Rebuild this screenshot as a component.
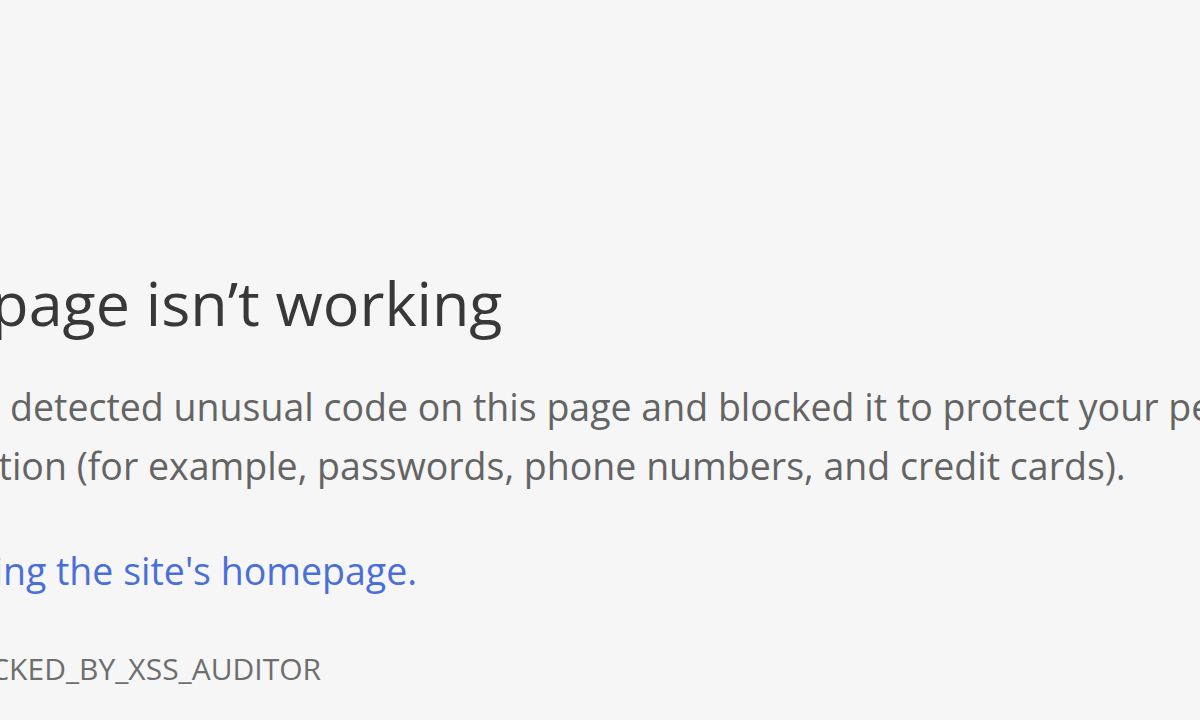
export default function App() {
  return (
    <div
      className="w-[1200px] h-[720px] overflow-hidden bg-[#f6f6f6]"
      style={{ fontFamily: '"Open Sans", "Noto Sans", "Liberation Sans", sans-serif' }}
    >
      <div className="ml-[-140px] pt-[267px] whitespace-nowrap">
        <h1 className="text-[61px] leading-[72px] text-[#383838] font-normal">This page isn’t working</h1>
        <p className="mt-[38px] text-[37.5px] leading-[59px] text-[#646464]">
          Chrome detected unusual code on this page and blocked it to protect your personal
          <br />
          information (for example, passwords, phone numbers, and credit cards).
        </p>
        <p className="mt-[46px] text-[37.5px] leading-[59px] text-[#4a6fd9]">Try visiting the site's homepage.</p>
        <div className="mt-[49px] pl-[5px] text-[30px] leading-[40px] text-[#6e6e6e]">ERR_BLOCKED_BY_XSS_AUDITOR</div>
      </div>
    </div>
  );
}
